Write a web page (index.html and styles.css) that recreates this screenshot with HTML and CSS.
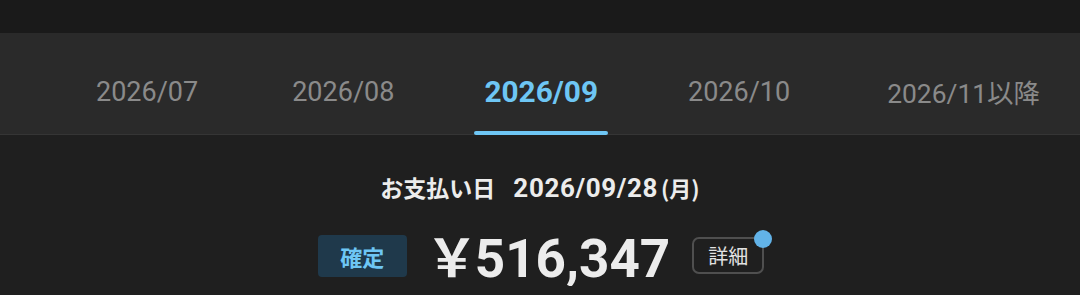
FILE: index.html
```html
<!DOCTYPE html>
<html lang="ja">
<head>
<meta charset="utf-8">
<link rel="stylesheet" href="styles.css">
</head>
<body>
<div class="topbar"></div>
<nav class="tabs">
  <div class="tab">2026/07</div>
  <div class="tab">2026/08</div>
  <div class="tab active">2026/09</div>
  <div class="tab">2026/10</div>
  <div class="tab last">2026/11以降</div>
</nav>
<main class="content">
  <div class="date-line">
    <span class="date-label">お支払い日</span>
    <span class="date-value">2026/09/28</span>
    <span class="date-dow">(月)</span>
  </div>
  <div class="amount-row">
    <span class="badge">確定</span>
    <span class="amount"><span class="yen">￥</span>516,347</span>
    <button class="detail">詳細<span class="dot"></span></button>
  </div>
</main>
</body>
</html>
```
FILE: styles.css
```css
html, body {
  margin: 0;
  padding: 0;
  background: #1f1f1f;
  font-family: Roboto, "Noto Sans CJK JP", sans-serif;
  color: #ececec;
  overflow: hidden;
}
.topbar {
  height: 33px;
  background: #1a1a1a;
}
.tabs {
  display: flex;
  align-items: center;
  height: 101px;
  padding-left: 49px;
  background: #2a2a2a;
  border-bottom: 1px solid #353535;
}
.tab {
  position: relative;
  height: 100%;
  display: flex;
  align-items: center;
  padding: 16px 47px 0 47px;
  font-size: 27px;
  color: #8a8a8a;
  white-space: nowrap;
  box-sizing: border-box;
}
.tab.active {
  font-size: 29.8px;
  font-weight: 700;
  color: #6ec6f4;
  padding: 16px 43px 0 43px;
}
.tab.last {
  padding-left: 50px;
  font-size: 26.4px;
}
.tab.active::after {
  content: "";
  position: absolute;
  left: 33px;
  right: 33px;
  bottom: -1px;
  height: 4px;
  border-radius: 2px;
  background: #6ec6f4;
}
.content {
  display: flex;
  flex-direction: column;
  align-items: center;
  padding-top: 37px;
}
.date-line {
  display: flex;
  align-items: baseline;
  font-weight: 700;
  height: 30px;
  line-height: 30px;
}
.date-label {
  font-family: "Noto Sans CJK JP", sans-serif;
  font-size: 23px;
  margin-right: 18px;
}
.date-value {
  font-size: 26px;
  letter-spacing: 0.6px;
  margin-right: 3px;
}
.date-dow {
  font-family: "Noto Sans CJK JP", sans-serif;
  font-size: 22px;
}
.amount-row {
  display: flex;
  align-items: center;
  margin-top: 23px;
  margin-left: 2px;
}
.badge {
  display: flex;
  align-items: center;
  justify-content: center;
  width: 89px;
  height: 42px;
  border-radius: 4px;
  background: #1f394b;
  color: #6ec6f4;
  font-family: "Noto Sans CJK JP", sans-serif;
  font-weight: 700;
  font-size: 22px;
}
.amount {
  margin-left: 19px;
  font-size: 53px;
  font-weight: 700;
  line-height: 1;
  color: #ececec;
  padding-top: 4px;
}
.yen {
  font-family: "Noto Sans CJK JP", sans-serif;
  font-size: 52px;
  margin-right: -3px;
}
.detail {
  position: relative;
  margin-left: 22px;
  width: 72px;
  height: 37px;
  border: 2px solid #4f4f4f;
  border-radius: 7px;
  background: transparent;
  color: #e2e2e2;
  font-family: "Noto Sans CJK JP", sans-serif;
  font-size: 20px;
  padding: 0;
  display: flex;
  align-items: center;
  justify-content: center;
}
.dot {
  position: absolute;
  right: -10px;
  top: -9px;
  width: 18px;
  height: 18px;
  border-radius: 50%;
  background: #62b3e8;
}
```
